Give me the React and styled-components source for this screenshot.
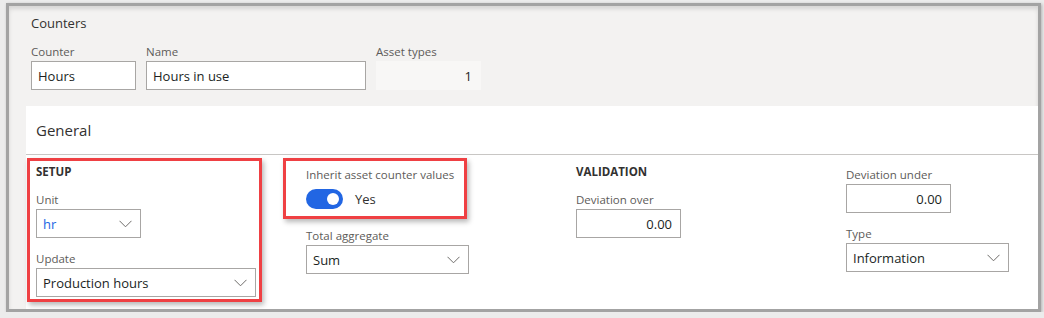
import React from "react";
import styled, { createGlobalStyle } from "styled-components";

const GlobalStyle = createGlobalStyle`
  * { box-sizing: border-box; margin: 0; padding: 0; }
  body {
    background: #ececec;
    font-family: "Segoe UI", "Open Sans", sans-serif;
    color: #323130;
  }
`;

const Frame = styled.div`
  width: 1035px;
  height: 309px;
  margin: 3px 0 0 6px;
  border: 3px solid #a3a3a3;
  box-shadow: 1px 1px 3px rgba(0, 0, 0, 0.25), inset 0 3px 4px rgba(0, 0, 0, 0.12);
  background: #f3f2f1;
  display: flex;
  flex-direction: column;
  overflow: hidden;
`;

const PageTitle = styled.div`
  padding: 7px 0 0 22px;
  font-size: 13px;
  line-height: 20px;
  color: #323130;
`;

const HeaderRow = styled.div`
  display: flex;
  gap: 10px;
  padding: 11px 0 0 22px;
`;

const Field = styled.div`
  display: flex;
  flex-direction: column;
  width: ${(p) => p.$w || 105}px;
  margin-bottom: ${(p) => p.$mb ?? 13}px;
`;

const Label = styled.div`
  font-size: 11.5px;
  line-height: 16px;
  color: #5d5b59;
  font-weight: 500;
  margin-bottom: 1px;
  white-space: nowrap;
`;

const Input = styled.div`
  height: 29px;
  border: 1px solid #a8a6a4;
  background: ${(p) => (p.$readonly ? "#f8f7f6" : "#fff")};
  border-color: ${(p) => (p.$readonly ? "#f8f7f6" : "#a8a6a4")};
  display: flex;
  align-items: center;
  justify-content: ${(p) => (p.$right ? "flex-end" : "flex-start")};
  padding: 0 8px 0 6px;
  font-size: 13px;
  color: ${(p) => (p.$link ? "#2266e3" : "#201f1e")};
  white-space: nowrap;
`;

const Chevron = styled.svg`
  margin-left: auto;
  flex-shrink: 0;
`;

const Card = styled.div`
  flex: 1;
  margin: 16px 0 0 17px;
  background: #fff;
  display: flex;
  flex-direction: column;
`;

const CardHeader = styled.div`
  height: 49px;
  border-bottom: 1px solid #c8c6c4;
  display: flex;
  align-items: center;
  padding-left: 10px;
  font-size: 15px;
  font-weight: 500;
  color: #323130;
`;

const CardBody = styled.div`
  display: grid;
  grid-template-columns: repeat(4, 270px);
  padding: 9px 0 0 10px;
`;

const Group = styled.div`
  position: relative;
  display: flex;
  flex-direction: column;
  padding-top: ${(p) => (p.$offset ? 3 : 0)}px;
`;

const GroupTitle = styled.div`
  font-size: 11.5px;
  line-height: 16px;
  font-weight: 700;
  color: #323130;
  margin-bottom: 12px;
`;

const Highlight = styled.div`
  position: absolute;
  left: ${(p) => p.$l}px;
  top: ${(p) => p.$t}px;
  width: ${(p) => p.$w}px;
  height: ${(p) => p.$h}px;
  border: 3px solid #ef4043;
  box-shadow: 2px 3px 5px rgba(0, 0, 0, 0.28);
  pointer-events: none;
`;

const ToggleRow = styled.div`
  height: 29px;
  display: flex;
  align-items: center;
  gap: 12px;
  margin-bottom: 15px;
  font-size: 13px;
  color: #323130;
`;

const Track = styled.div`
  width: 37px;
  height: 20px;
  border-radius: 10px;
  background: ${(p) => (p.$on ? "#2266e3" : "#fff")};
  display: flex;
  align-items: center;
  justify-content: ${(p) => (p.$on ? "flex-end" : "flex-start")};
  padding: 0 4px;
`;

const Knob = styled.div`
  width: 12px;
  height: 12px;
  border-radius: 50%;
  background: #fff;
`;

const Down = () => (
  <Chevron width="13" height="8" viewBox="0 0 13 8">
    <path d="M0.5 0.8 L6.5 6.8 L12.5 0.8" fill="none" stroke="#6e6c6a" strokeWidth="1" />
  </Chevron>
);

const Select = ({ value, link }) => (
  <Input $link={link}>
    {value}
    <Down />
  </Input>
);

export default function App() {
  return (
    <>
      <GlobalStyle />
      <Frame>
        <PageTitle>Counters</PageTitle>
        <HeaderRow>
          <Field $w={105} $mb={0}>
            <Label>Counter</Label>
            <Input>Hours</Input>
          </Field>
          <Field $w={220} $mb={0}>
            <Label>Name</Label>
            <Input>Hours in use</Input>
          </Field>
          <Field $w={105} $mb={0}>
            <Label>Asset types</Label>
            <Input $readonly $right>1</Input>
          </Field>
        </HeaderRow>
        <Card>
          <CardHeader>General</CardHeader>
          <CardBody>
            <Group>
              <Highlight $l={-9} $t={-6} $w={235} $h={144} />
              <GroupTitle>SETUP</GroupTitle>
              <Field $w={105}>
                <Label>Unit</Label>
                <Select value="hr" link />
              </Field>
              <Field $w={220}>
                <Label>Update</Label>
                <Select value="Production hours" />
              </Field>
            </Group>
            <Group $offset>
              <Highlight $l={-23} $t={-6} $w={184} $h={61} />
              <Label>Inherit asset counter values</Label>
              <ToggleRow>
                <Track $on>
                  <Knob />
                </Track>
                Yes
              </ToggleRow>
              <Field $w={163}>
                <Label>Total aggregate</Label>
                <Select value="Sum" />
              </Field>
            </Group>
            <Group>
              <GroupTitle>VALIDATION</GroupTitle>
              <Field $w={105}>
                <Label>Deviation over</Label>
                <Input $right>0.00</Input>
              </Field>
            </Group>
            <Group $offset>
              <Field $w={105}>
                <Label>Deviation under</Label>
                <Input $right>0.00</Input>
              </Field>
              <Field $w={163}>
                <Label>Type</Label>
                <Select value="Information" />
              </Field>
            </Group>
          </CardBody>
        </Card>
      </Frame>
    </>
  );
}
